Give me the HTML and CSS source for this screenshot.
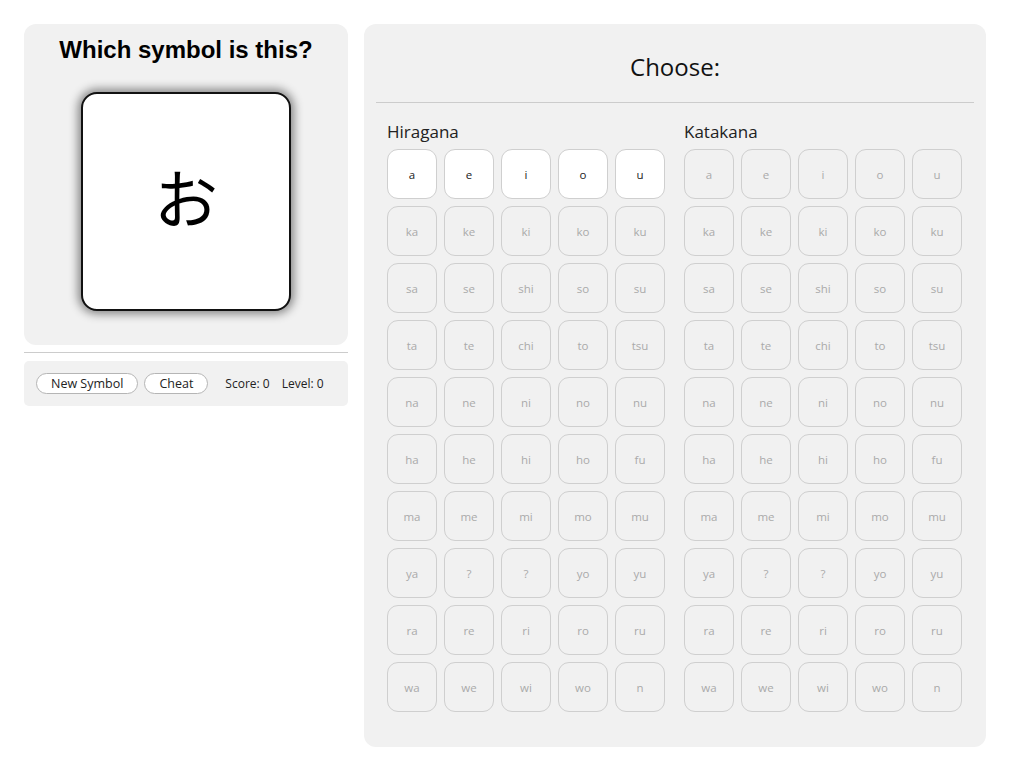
FILE: index.html
```html
<!DOCTYPE html>
<html lang="en">
<head>
<meta charset="utf-8">
<title>Kana Quiz</title>
<link rel="stylesheet" href="styles.css">
</head>
<body>
<div class="app">
  <div class="left">
    <div class="question">
      <h1 class="q-title">Which symbol is this?</h1>
      <div class="card"><span class="glyph">お</span></div>
    </div>
    <hr class="sep">
    <div class="controls">
      <button class="btn">New Symbol</button>
      <button class="btn">Cheat</button>
      <span class="stat">Score: 0</span>
      <span class="stat">Level: 0</span>
    </div>
  </div>
  <div class="right">
    <h2 class="choose">Choose:</h2>
    <hr class="sep2">
    <div class="sets">
      <div class="set">
        <div class="set-title">Hiragana</div>
        <div class="grid" id="hira"></div>
      </div>
      <div class="set">
        <div class="set-title">Katakana</div>
        <div class="grid" id="kata"></div>
      </div>
    </div>
  </div>
</div>
<script src="app.js"></script>
</body>
</html>
```
FILE: app.js
```js
var rows = [
  ["a","e","i","o","u"],
  ["ka","ke","ki","ko","ku"],
  ["sa","se","shi","so","su"],
  ["ta","te","chi","to","tsu"],
  ["na","ne","ni","no","nu"],
  ["ha","he","hi","ho","fu"],
  ["ma","me","mi","mo","mu"],
  ["ya","?","?","yo","yu"],
  ["ra","re","ri","ro","ru"],
  ["wa","we","wi","wo","n"]
];
function fill(id, activeFirst) {
  var g = document.getElementById(id);
  rows.forEach(function (r, ri) {
    r.forEach(function (s) {
      var d = document.createElement("div");
      d.className = "cell" + (activeFirst && ri === 0 ? " active" : "");
      d.textContent = s;
      g.appendChild(d);
    });
  });
}
fill("hira", true);
fill("kata", false);
```
FILE: styles.css
```css
html, body { margin: 0; padding: 0; background: #fff; }
body {
  font-family: "Open Sans", "Noto Sans", sans-serif;
  color: #222;
}
.app {
  display: flex;
  gap: 16px;
  padding: 24px 25px 24px 24px;
  align-items: flex-start;
}
.left { width: 324px; flex: none; }
.question {
  background: #f1f1f1;
  border-radius: 12px;
  height: 321px;
  box-sizing: border-box;
  padding-top: 11px;
  display: flex;
  flex-direction: column;
  align-items: center;
}
.q-title {
  margin: 0;
  font-family: "Liberation Sans", Arial, sans-serif;
  font-weight: bold;
  font-size: 24px;
  line-height: 29px;
  color: #000;
}
.card {
  margin-top: 28px;
  width: 210px;
  height: 219px;
  box-sizing: border-box;
  border: 2px solid #111;
  border-radius: 16px;
  background: #fff;
  box-shadow: 0 0 10px 3px rgba(0,0,0,0.45);
  display: flex;
  align-items: center;
  justify-content: center;
}
.glyph {
  font-family: "Noto Sans CJK JP", sans-serif;
  font-size: 64px;
  line-height: 1;
  color: #000;
  margin-top: -14px;
}
.sep {
  border: 0;
  border-top: 1px solid #ccc;
  margin: 7px 0 8px;
}
.controls {
  background: #f1f1f1;
  border-radius: 5px;
  height: 45px;
  box-sizing: border-box;
  padding: 0 12px;
  display: flex;
  align-items: center;
  gap: 6px;
}
.btn {
  font-family: "Open Sans", sans-serif;
  font-size: 12.5px;
  color: #222;
  background: #fff;
  border: 1px solid #b5b5b5;
  border-radius: 11px;
  height: 21px;
  padding: 0 14px;
  line-height: 19px;
}
.stat {
  font-size: 12px;
  color: #222;
  margin-left: 11px;
}
.stat + .stat { margin-left: 6px; }
.right {
  width: 622px;
  flex: none;
  background: #f1f1f1;
  border-radius: 12px;
  padding: 0 12px 35px;
  box-sizing: border-box;
}
.choose {
  margin: 0;
  padding-top: 27px;
  text-align: center;
  font-weight: normal;
  font-size: 24px;
  line-height: 32px;
  color: #111;
}
.sep2 {
  border: 0;
  border-top: 1px solid #ccc;
  margin: 19px 0 0;
}
.sets {
  display: flex;
  gap: 19px;
  padding: 0 11px;
}
.set { width: 278px; }
.set-title {
  font-size: 17px;
  line-height: 22px;
  margin-top: 18px;
  margin-bottom: 6px;
  color: #222;
}
.grid {
  display: grid;
  grid-template-columns: repeat(5, 50px);
  grid-auto-rows: 50px;
  gap: 7px;
}
.cell {
  box-sizing: border-box;
  border: 1px solid #cfcfcf;
  border-radius: 11px;
  display: flex;
  align-items: center;
  justify-content: center;
  font-size: 11.5px;
  color: #aaa;
}
.cell.active {
  background: #fff;
  color: #222;
}
```
